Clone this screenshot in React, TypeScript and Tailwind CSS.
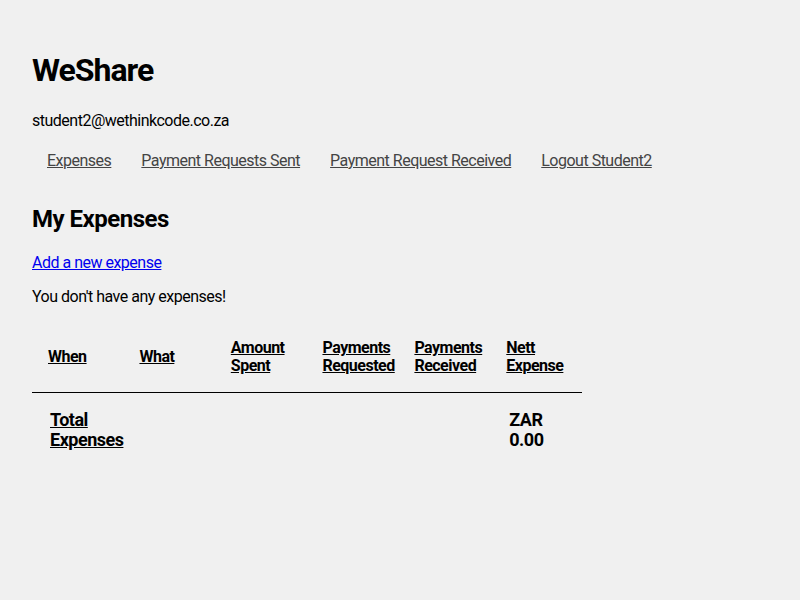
export default function App() {
  const headers = [
    ["When"],
    ["What"],
    ["Amount", "Spent"],
    ["Payments", "Requested"],
    ["Payments", "Received"],
    ["Nett", "Expense"],
  ];
  const nav = ["Expenses", "Payment Requests Sent", "Payment Request Received", "Logout Student2"];

  return (
    <div className="min-h-screen bg-[#f0f0f0] text-black px-8 pt-[51px] tracking-[-0.5px]" style={{ fontFamily: "Roboto, sans-serif" }}>
      <h1 className="text-[32px] leading-[38px] font-bold tracking-[-1px]">WeShare</h1>
      <div className="mt-[22px] text-[16px] leading-[20px]">student2@wethinkcode.co.za</div>
      <ul className="flex mt-[20px] text-[16px] leading-[20px]">
        {nav.map((n) => (
          <li key={n} className="px-[15px]">
            <a href="#" className="text-[#444] underline">{n}</a>
          </li>
        ))}
      </ul>
      <h2 className="mt-[34px] text-[24px] leading-[28px] font-bold">My Expenses</h2>
      <a href="#" className="block mt-[20px] text-[16px] leading-[20px] text-[#0000ee] underline w-fit">Add a new expense</a>
      <p className="mt-[14px] text-[16px] leading-[20px]">You don't have any expenses!</p>
      <table className="mt-[13px] w-[550px] border-collapse">
        <thead>
          <tr className="border-b border-black">
            {headers.map((h, i) => (
              <th key={i} className="w-[92px] h-[72px] pl-4 pt-[2px] text-left align-middle font-bold text-[16px] leading-[18px]">
                <span className="underline">{h.map((l, j) => <div key={j}>{l}</div>)}</span>
              </th>
            ))}
          </tr>
        </thead>
        <tfoot>
          <tr>
            <td colSpan={5} className="pl-[18px] pt-[17px] align-top text-[18px] leading-[20px] font-bold">
              <span className="underline">Total<br />Expenses</span>
            </td>
            <td className="pl-[19px] pt-[17px] align-top text-[18px] leading-[20px] font-bold">ZAR<br />0.00</td>
          </tr>
        </tfoot>
      </table>
    </div>
  );
}
